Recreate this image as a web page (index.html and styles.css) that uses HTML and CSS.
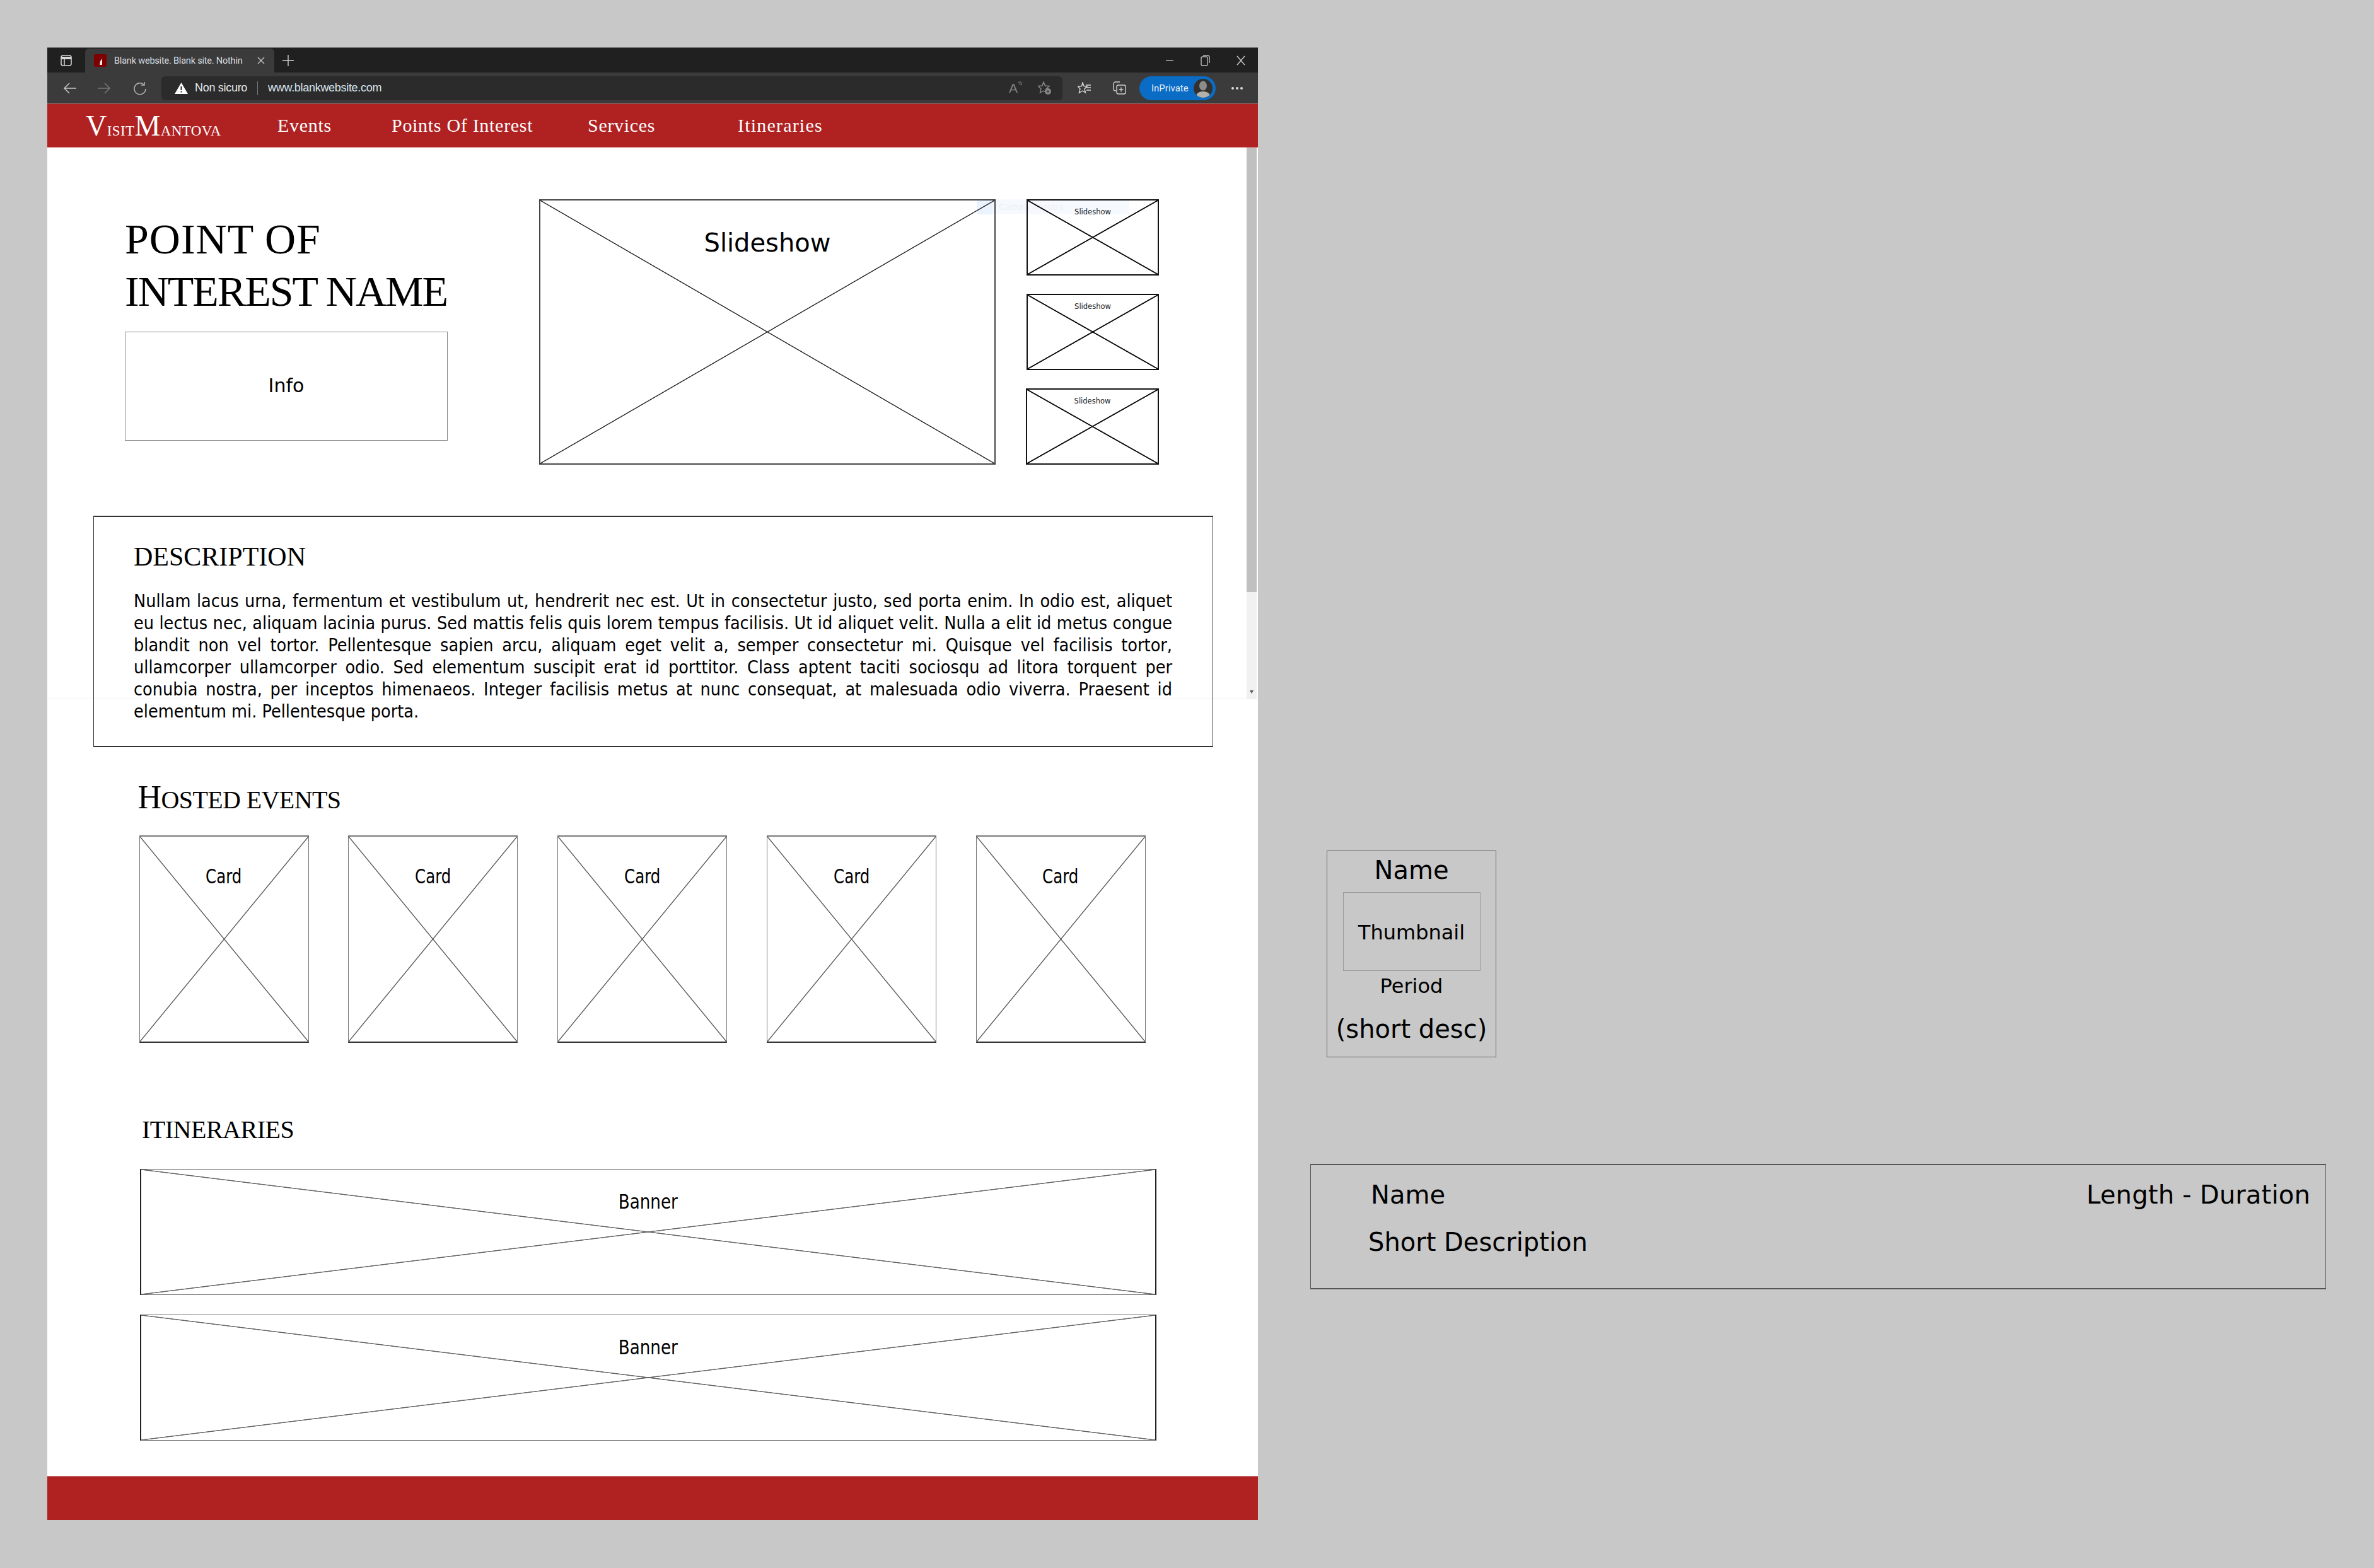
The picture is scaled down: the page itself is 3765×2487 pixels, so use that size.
FILE: index.html
```html
<!DOCTYPE html>
<html lang="it">
<head>
  <meta charset="UTF-8">
  <title>Blank website. Blank site. Nothing to see here.</title>
  <link rel="stylesheet" href="styles.css">
</head>
<body>
  <div class="window">
    <div class="tabstrip">
      <svg class="tabs-icon" width="18" height="18" viewBox="0 0 18 18" fill="none" stroke="#d8d8d8" stroke-width="1.5"><rect x="1" y="1" width="16" height="16" rx="3"/><path d="M1 5h16" stroke-width="4"/><path d="M6 6v11"/></svg>
      <div class="tab">
        <svg class="favicon" width="20" height="20" viewBox="0 0 20 20"><rect width="20" height="20" rx="3" fill="#7f0000"/><path d="M9 17l1-6 3-4 0 10z" fill="#eee"/></svg>
        <span class="tab-title">Blank website. Blank site. Nothin</span>
        <svg class="tab-close" width="12" height="12" viewBox="0 0 12 12" stroke="#ccc" stroke-width="1.3"><path d="M1 1l10 10M11 1L1 11"/></svg>
      </div>
      <svg class="tab-new" width="18" height="18" viewBox="0 0 18 18" stroke="#d0d0d0" stroke-width="1.4"><path d="M9 0v18M0 9h18"/></svg>
      <div class="winctl">
        <svg width="14" height="14" viewBox="0 0 14 14" stroke="#bbb" stroke-width="1.4"><path d="M1 7h12"/></svg>
        <svg width="15" height="18" viewBox="0 0 15 18" fill="none" stroke="#bbb" stroke-width="1.4"><rect x="1" y="3" width="10" height="14" rx="2"/><path d="M4 1h7a3 3 0 0 1 3 3v9"/></svg>
        <svg width="14" height="16" viewBox="0 0 14 16" stroke="#ccc" stroke-width="1.4"><path d="M1 1l12 14M13 1L1 15"/></svg>
      </div>
    </div>
    <div class="toolbar">
      <svg class="nav-back" width="21" height="20" viewBox="0 0 21 20" fill="none" stroke="#c8c8c8" stroke-width="1.5"><path d="M21 10H2M10 2l-8 8 8 8"/></svg>
      <svg class="nav-fwd" width="21" height="20" viewBox="0 0 21 20" fill="none" stroke="#777" stroke-width="1.5"><path d="M0 10h19M11 2l8 8-8 8"/></svg>
      <svg class="nav-reload" width="21" height="22" viewBox="0 0 21 22" fill="none" stroke="#b0b0b0" stroke-width="1.6"><path d="M17 5a9 9 0 1 0 3 7M18 1v5h-5"/></svg>
      <div class="addressbar">
        <svg width="21" height="18" viewBox="0 0 21 18"><path d="M10.500 0L21 18H0z" fill="#fff"/><path d="M9.500 6h2v6h-2zM9.500 13.500h2v2h-2z" fill="#2b2b2b"/></svg>
        <span class="secure">Non sicuro</span>
        <span class="addr-sep"></span>
        <span class="url">www.blankwebsite.com</span>
        <div class="addr-tools">
          <span class="read"><span>A</span><svg width="7" height="12" viewBox="0 0 7 12" fill="none" stroke="#777" stroke-width="1.2"><path d="M1 1c2 1 3 3 3 5M3 0c2 1 3.500 3 3.500 6"/></svg></span>
          <svg width="22" height="22" viewBox="0 0 22 22" fill="none" stroke="#8a8a8a" stroke-width="1.4"><path d="M9 1l2.500 6 6.500 .5-5 4.500 1.500 6-5.500-3-5.500 3 1.500-6-4.500-4.500 6.500-.5z"/><circle cx="16" cy="16" r="5" fill="#8a8a8a" stroke="none"/><path d="M13.500 16h5M16 13.500v5" stroke="#2b2b2b" stroke-width="1"/></svg>
        </div>
      </div>
      <svg class="tool-star" width="21" height="19" viewBox="0 0 21 19" fill="none" stroke="#d8d8d8" stroke-width="1.4"><path d="M8 1l2 5.500 5 .5-4 4 1.500 6-4.500-3-5.500 3 1.500-6-3.500-4 6-.5z"/><path d="M13 5h8M14 9h7M14 13h7"/></svg>
      <svg class="tool-coll" width="21" height="21" viewBox="0 0 21 21" fill="none" stroke="#d0d0d0" stroke-width="1.4"><path d="M5 15H4a3 3 0 0 1-3-3V4a3 3 0 0 1 3-3h7"/><rect x="6" y="6" width="14" height="14" rx="2.500"/><path d="M13 9.500v7M9.500 13h7"/></svg>
      <div class="inprivate">
        <span>InPrivate</span>
        <svg width="30" height="30" viewBox="0 0 30 30"><defs><clipPath id="av"><circle cx="15" cy="15" r="15"/></clipPath></defs><circle cx="15" cy="15" r="15" fill="#33312f"/><g clip-path="url(#av)"><ellipse cx="15" cy="11" rx="6" ry="7.500" fill="#8e8c88"/><ellipse cx="15" cy="27" rx="11" ry="7" fill="#b4b0aa"/></g></svg>
      </div>
      <span class="more"><i></i><i></i><i></i></span>
    </div>

    <header class="sitebar">
      <span class="logo"><span class="logo-cap">V</span>isit<span class="logo-cap">M</span>antova</span>
      <nav class="sitenav">
        <a class="nav-events">Events</a>
        <a class="nav-poi">Points Of Interest</a>
        <a class="nav-services">Services</a>
        <a class="nav-itin">Itineraries</a>
      </nav>
    </header>

    <main class="content">
      <section class="hero">
        <div class="hero-left">
          <h1 class="poi-name"><span class="poi-first">POINT OF</span><br>INTEREST NAME</h1>
          <div class="info">Info</div>
        </div>
        <div class="xbox slideshow"><span>Slideshow</span></div>
        <div class="thumbs">
          <div class="xbox thumb"><span>Slideshow</span></div>
          <div class="xbox thumb"><span>Slideshow</span></div>
          <div class="xbox thumb thumb-last"><span>Slideshow</span></div>
        </div>
      </section>

      <section class="description">
        <h2 class="heading">DESCRIPTION</h2>
        <p>Nullam lacus urna, fermentum et vestibulum ut, hendrerit nec est. Ut in consectetur justo, sed porta enim. In odio est, aliquet eu lectus nec, aliquam lacinia purus. Sed mattis felis quis lorem tempus facilisis. Ut id aliquet velit. Nulla a elit id metus congue blandit non vel tortor. Pellentesque sapien arcu, aliquam eget velit a, semper consectetur mi. Quisque vel facilisis tortor, ullamcorper ullamcorper odio. Sed elementum suscipit erat id porttitor. Class aptent taciti sociosqu ad litora torquent per conubia nostra, per inceptos himenaeos. Integer facilisis metus at nunc consequat, at malesuada odio viverra. Praesent id elementum mi. Pellentesque porta.</p>
      </section>

      <section class="events">
        <h2 class="heading events-title">HOSTED EVENTS</h2>
        <div class="cards">
          <div class="xbox card"><span>Card</span></div>
          <div class="xbox card"><span>Card</span></div>
          <div class="xbox card"><span>Card</span></div>
          <div class="xbox card"><span>Card</span></div>
          <div class="xbox card"><span>Card</span></div>
        </div>
      </section>

      <section class="itineraries">
        <h2 class="heading itin-title">ITINERARIES</h2>
        <div class="xbox banner"><span>Banner</span></div>
        <div class="xbox banner"><span>Banner</span></div>
      </section>
    </main>

    <footer class="sitefoot"></footer>

    <div class="scrollbar"><div class="scroll-thumb"></div><div class="scroll-arrow"></div></div>
    <div class="capture-tip"><i></i><span>Cattura finestra</span></div>
    <div class="capture-line"></div>
  </div>

  <aside class="notes">
    <div class="note-card">
      <div class="nc-name">Name</div>
      <div class="nc-thumb">Thumbnail</div>
      <div class="nc-period">Period</div>
      <div class="nc-desc">(short desc)</div>
    </div>
    <div class="note-banner">
      <div class="nb-row"><span>Name</span><span>Length - Duration</span></div>
      <div class="nb-desc">Short Description</div>
    </div>
  </aside>
</body>
</html>
```

FILE: styles.css
```css
html, body {
  margin: 0;
  height: 100%;
  overflow: hidden;
}
body {
  background: #c8c8c8;
  display: flex;
  align-items: flex-start;
  padding: 75px 0 0 75px;
  box-sizing: border-box;
  font-family: "DejaVu Sans", sans-serif;
  color: #000;
}

/* browser frame */
.window {
  position: relative;
  width: 1920px;
  background: #fff;
  flex: none;
}
.tabstrip {
  height: 40px;
  box-sizing: border-box;
  background: #202020;
  border-top: 1px solid #6a6a6a;
  display: flex;
  align-items: center;
  padding-left: 21px;
}
.tab {
  width: 300px;
  height: 38px;
  margin-left: 21px;
  box-sizing: border-box;
  background: #3b3b3b;
  border-radius: 6px 6px 0 0;
  display: flex;
  align-items: center;
  padding: 0 15px 0 14px;
  align-self: flex-end;
}
.favicon { flex: none; }
.tab-title {
  flex: 1;
  margin-left: 12px;
  white-space: nowrap;
  font: 14.500px "Roboto", sans-serif;
  letter-spacing: -0.2px;
  color: #d8dde0;
}
.tab-new { margin-left: 13px; }
.winctl {
  margin-left: auto;
  display: flex;
  align-items: center;
  gap: 42px;
  padding-right: 20px;
}
.toolbar {
  height: 49px;
  box-sizing: border-box;
  background: #3b3b3b;
  display: flex;
  align-items: center;
  padding: 0 0 0 25px;
}
.toolbar svg { flex: none; }
.nav-back { margin-right: 34px; }
.nav-fwd { margin-right: 35px; }
.addressbar {
  width: 1429px;
  height: 38px;
  margin-left: 24px;
  background: #2b2b2b;
  border-radius: 6px;
  display: flex;
  align-items: center;
  padding-left: 21px;
  box-sizing: border-box;
  font: 18px "Liberation Sans", sans-serif;
}
.secure { color: #e8e8e8; margin-left: 11px; letter-spacing: -0.3px; }
.addr-sep { width: 1px; height: 22px; background: #777; margin: 0 16px; }
.url { color: #d8e4ee; letter-spacing: -0.3px; }
.addr-tools {
  margin-left: auto;
  display: flex;
  align-items: center;
  gap: 25px;
  padding-right: 17px;
}
.read { display: flex; align-items: flex-start; color: #808080; font-size: 21px; line-height: 22px; }
.tool-star { margin-left: 24px; }
.tool-coll { margin-left: 35px; }
.inprivate {
  width: 121px;
  height: 38px;
  margin-left: 21px;
  box-sizing: border-box;
  background: #0a6cc4;
  border-radius: 19px;
  display: flex;
  align-items: center;
  justify-content: space-between;
  padding: 0 5px 0 19px;
  color: #e4eef8;
  font: 15px "Roboto", sans-serif;
}
.more { display: flex; gap: 3px; margin-left: 25px; }
.more i { width: 4px; height: 4px; border-radius: 50%; background: #ddd; }

/* site header */
.sitebar {
  height: 70px;
  box-sizing: border-box;
  background: #b02222;
  border-top: 1px solid #a66;
  border-bottom: 1px solid #cc5555;
  display: flex;
  align-items: center;
  color: #fff;
  font-family: "Liberation Serif", serif;
}
.logo {
  width: 214px;
  margin-left: 61px;
  font-size: 33px;
  font-variant: small-caps;
  letter-spacing: 0.4px;
  white-space: nowrap;
}
.logo-cap { font-size: 46px; }
.sitenav { display: flex; font-size: 30px; letter-spacing: 0.7px; }
.nav-events { margin-left: 90px; width: 181px; }
.nav-poi { width: 311px; }
.nav-services { width: 238px; }
.nav-itin { letter-spacing: 1.2px; }

/* wireframe boxes */
.xbox {
  --line: #333;
  --w: 0.4px;
  --edge: 1.100px;
  position: relative;
  z-index: 1;
  box-sizing: border-box;
  border: 2px solid #333;
  text-align: center;
  background-image:
    linear-gradient(to top right, transparent calc(50% - var(--edge)), var(--line) calc(50% - var(--w)), var(--line) calc(50% + var(--w)), transparent calc(50% + var(--edge))),
    linear-gradient(to bottom right, transparent calc(50% - var(--edge)), var(--line) calc(50% - var(--w)), var(--line) calc(50% + var(--w)), transparent calc(50% + var(--edge)));
}

.content { height: 2107px; box-sizing: border-box; overflow: hidden; }

.hero {
  display: flex;
  height: 421px;
  margin-top: 82px;
  padding-left: 123px;
}
.hero-left {
  width: 512px;
  display: flex;
  flex-direction: column;
}
.poi-name {
  margin: 22px 0 0;
  font: normal 68px/83px "Liberation Serif", serif;
  letter-spacing: -2px;
  white-space: nowrap;
}
.poi-first { letter-spacing: 1px; }
.info {
  margin-top: 22px;
  height: 173px;
  box-sizing: border-box;
  border: 1px solid #888;
  text-align: center;
  font-size: 30px;
  line-height: 170px;
}
.slideshow {
  width: 724px;
  margin-left: 145px;
  font-size: 40px;
  padding-top: 44px;
  border-color: #444;
}
.thumbs {
  width: 210px;
  margin-left: 49px;
  display: flex;
  flex-direction: column;
  gap: 29px;
}
.thumb {
  --line: #111;
  --w: 0.6px;
  --edge: 1.300px;
  height: 121px;
  font-size: 11.500px;
  padding-top: 11px;
  color: #222;
  border-color: #111;
}
.thumb-last { margin-left: -1px; }

.description {
  box-sizing: border-box;
  width: 1776px;
  height: 367px;
  margin: 81px 0 0 73px;
  border: 1px solid #333;
  border-top-width: 2px;
  border-bottom-width: 2px;
  padding: 35px 64px 0 63px;
}
.heading {
  margin: 0;
  font: normal 42px/56px "Liberation Serif", serif;
}
.description p {
  margin: 25px 0 0;
  font-family: "DejaVu Sans Condensed", "DejaVu Sans", sans-serif;
  font-size: 28.500px;
  line-height: 35px;
  text-align: justify;
}

.events { padding: 0 0 0 145.500px; }
.events-title {
  margin: 52px 0 0 -2px;
  font-size: 40px;
  letter-spacing: -0.6px;
}
.events-title::first-letter { font-size: 52px; }
.cards {
  display: flex;
  gap: 62.750px;
  margin-top: 28px;
}
.card {
  --line: #666;
  width: 269px;
  height: 329px;
  flex: none;
  border-width: 1px;
  border-color: #777;
  border-top: 2px solid #777;
  border-bottom: 2px solid #333;
  font-family: "DejaVu Sans Condensed", "DejaVu Sans", sans-serif;
  font-size: 32px;
  line-height: 36px;
  padding-top: 45px;
}
.card span { display: inline-block; transform: scaleX(0.85); }

.itineraries { padding-left: 147px; }
.itin-title { margin: 110px 0 0 3px; font-size: 40px; letter-spacing: -0.5px; }
.banner {
  --line: #666;
  width: 1612px;
  height: 200px;
  margin-top: 34px;
  border-width: 1px 2px;
  border-color: #666 #222;
  font-family: "DejaVu Sans Condensed", "DejaVu Sans", sans-serif;
  font-size: 32px;
  line-height: 36px;
  padding-top: 33px;
}
.banner span { display: inline-block; transform: scaleX(0.91); }
.banner + .banner { margin-top: 31px; }

.sitefoot { height: 70px; background: #b02222; border-top: 1px solid #c77; box-sizing: border-box; }

/* things lying over the page */
.scrollbar {
  position: absolute;
  left: 1902px;
  top: 159px;
  width: 16px;
  height: 874px;
  background: #f1f1f1;
}
.scroll-thumb { height: 705px; background: #c0c0c0; }
.scroll-arrow {
  position: absolute;
  left: 5px;
  bottom: 8px;
  border: 3px solid transparent;
  border-top: 5px solid #555;
  border-bottom: 0;
}
.capture-tip {
  position: absolute;
  left: 1474px;
  top: 241px;
  width: 242px;
  height: 24px;
  background: rgba(225, 240, 255, 0.3);
  display: flex;
  font: 15px/24px "Liberation Sans", sans-serif;
  color: rgba(150, 150, 150, 0.12);
}
.capture-tip i { width: 25px; background: rgba(210, 230, 255, 0.3); margin-right: 10px; }
.capture-line {
  position: absolute;
  left: 0;
  top: 1033px;
  width: 100%;
  height: 1px;
  background: rgba(200, 200, 200, 0.3);
}

/* notes beside the window */
.notes {
  flex: none;
  padding-top: 1274px;
  display: flex;
  flex-direction: column;
  align-items: flex-start;
  margin-left: 82px;
  font-size: 40px;
}
.note-card {
  width: 269px;
  height: 328px;
  margin-left: 27px;
  box-sizing: border-box;
  border: 1px solid #666;
  text-align: center;
  line-height: 48px;
  padding-top: 6px;
}
.nc-thumb {
  width: 218px;
  height: 125px;
  margin: 11px auto 0;
  box-sizing: border-box;
  border: 1px solid #999;
  font-size: 32px;
  line-height: 126px;
}
.nc-period { font-size: 32px; line-height: 44px; margin-top: 2px; }
.nc-desc { line-height: 60px; margin-top: 16px; white-space: nowrap; }
.note-banner {
  width: 1611px;
  height: 199px;
  margin: 169px 0 0 1px;
  box-sizing: border-box;
  border: 1px solid #555;
  border-width: 2px 1px;
  padding: 23px 24px 0 91px;
  line-height: 48px;
}
.nb-row { display: flex; justify-content: space-between; margin-left: 4px; }
.nb-row span:last-child { letter-spacing: 0.2px; }
.nb-desc { margin-top: 27px; }
```
